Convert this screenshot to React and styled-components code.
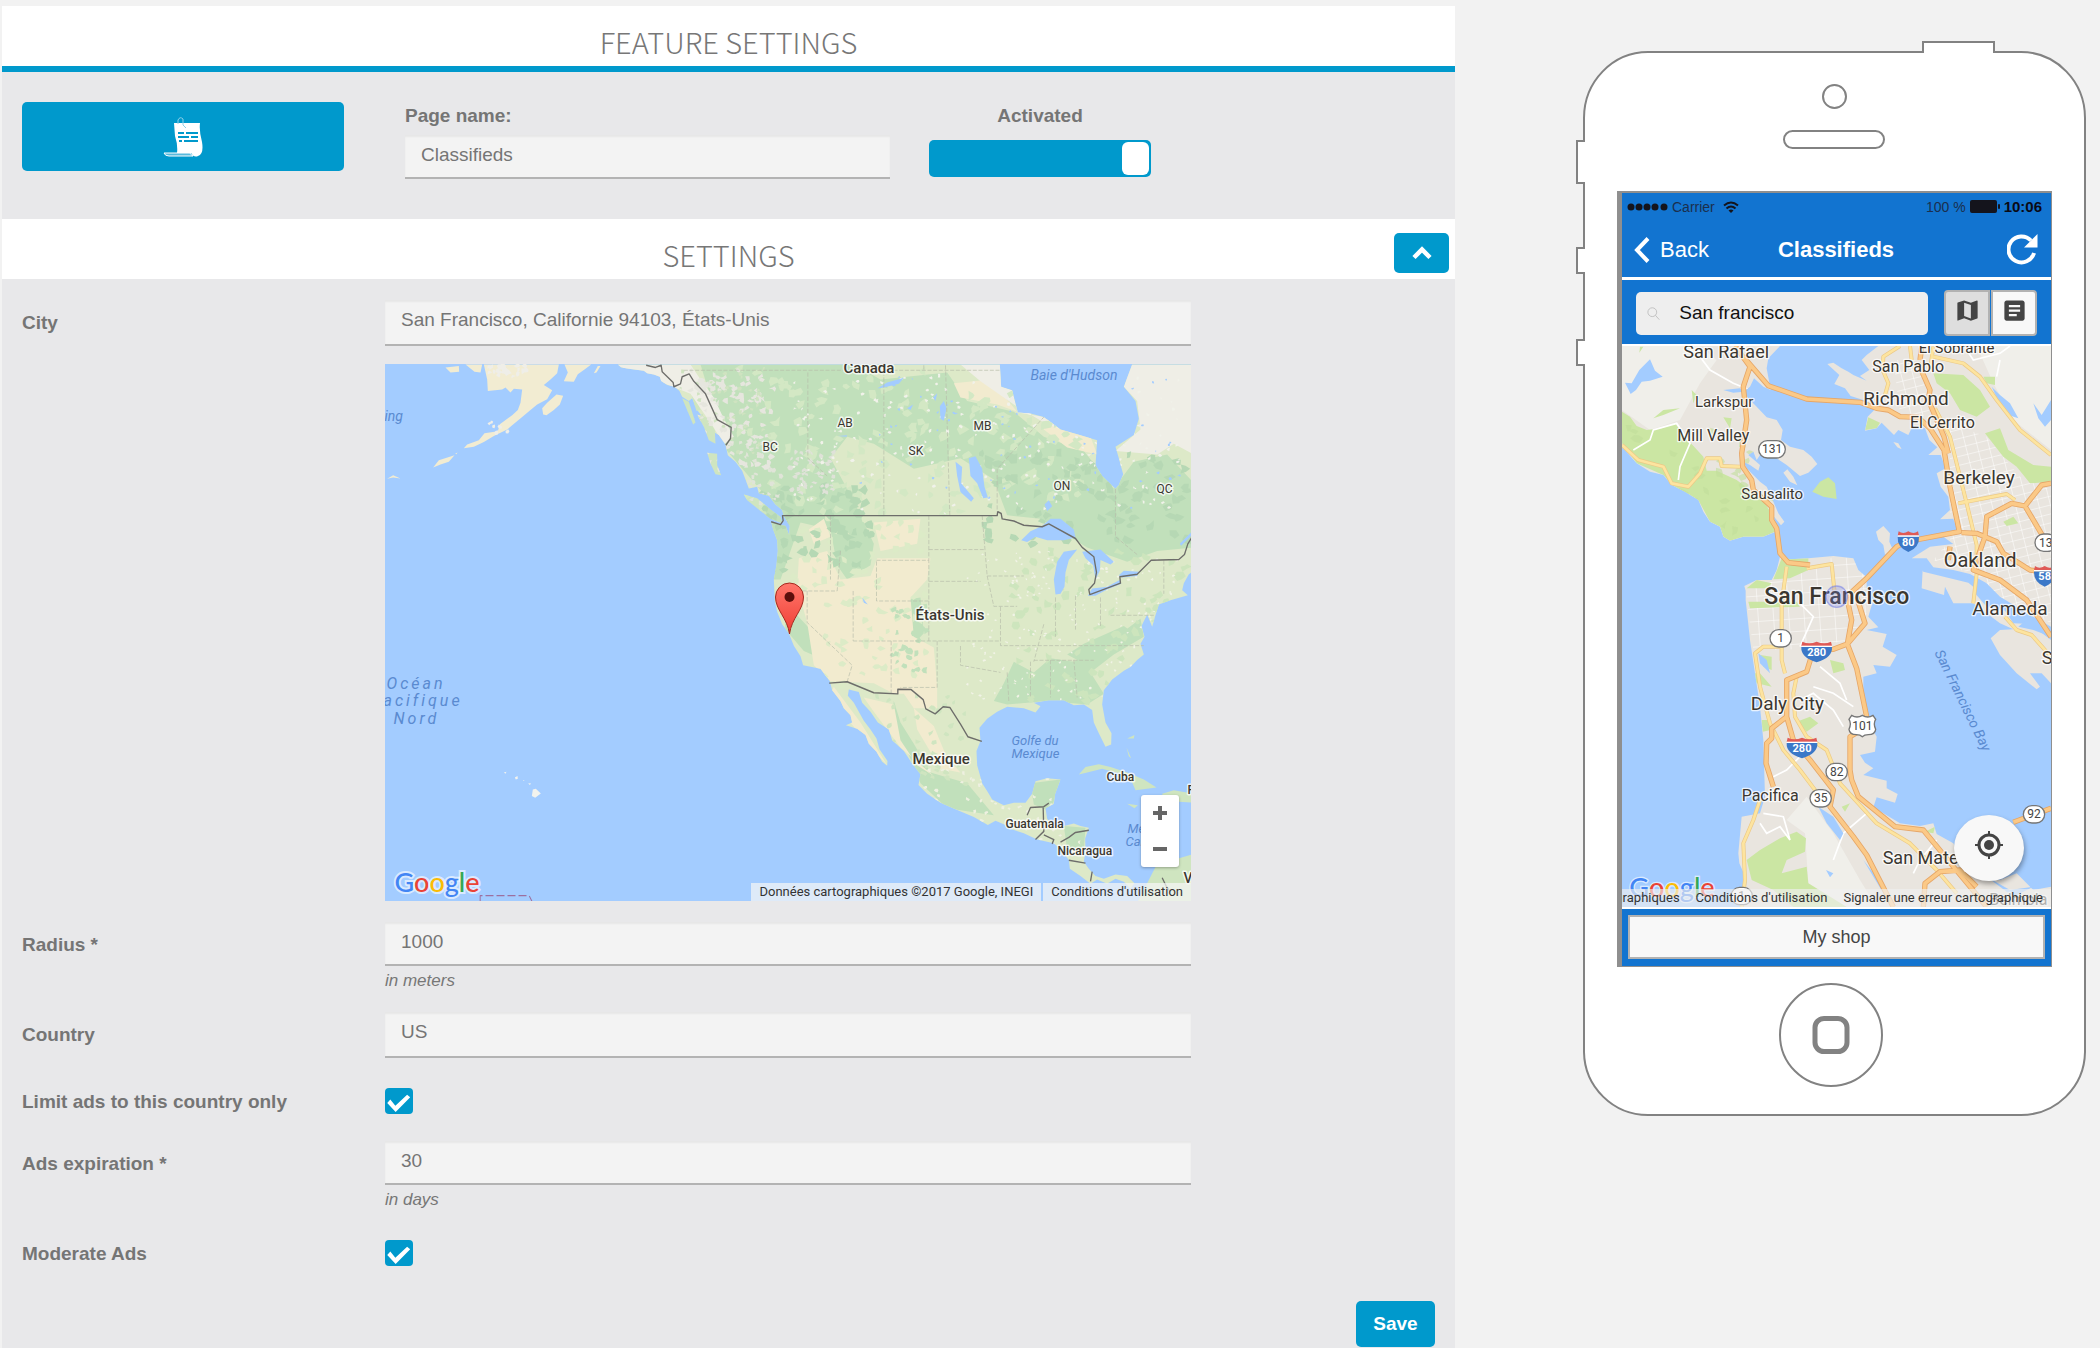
import React from "react";
import styled, { createGlobalStyle, css } from "styled-components";

const BLUE = "#0099cc";
const APP_BLUE = "#1274d0";
const WATER = "#a3ccff";
const SANS = '"Liberation Sans", Arial, sans-serif';
const MAPFONT = "Roboto, sans-serif";

const GlobalStyle = createGlobalStyle`
  *, *::before, *::after { box-sizing: border-box; }
  body { margin: 0; background: #f2f2f2; color: #757575; font-family: ${SANS}; font-size: 19px; line-height: 22px; }
  button, input { font-family: inherit; margin: 0; }
`;

const Page = styled.div`
  display: grid;
  grid-template-columns: minmax(0, 1fr) 645px;
  min-height: 100vh;
  padding: 6px 0 0 2px;
`;

const Panel = styled.main`
  background: #e8e8ea;
`;

const SectionHead = styled.header`
  display: grid;
  grid-template-columns: 1fr auto 1fr;
  height: ${(p) => (p.$accent ? 66 : 60)}px;
  background: #fff;
  border-bottom: ${(p) => (p.$accent ? `6px solid ${BLUE}` : "0")};
`;

const Title = styled.h2`
  grid-column: 2;
  margin: 0;
  padding-top: 12px;
  font: 300 29px/46px "Noto Sans CJK SC", "Open Sans", sans-serif;
  color: #777;
`;

const solid = css`
  border: 0;
  border-radius: 5px;
  background: ${BLUE};
  color: #fff;
  display: flex;
  align-items: center;
  justify-content: center;
  padding: 0;
`;

const CollapseButton = styled.button`
  ${solid}
  grid-column: 3;
  justify-self: end;
  align-self: end;
  width: 55px;
  height: 40px;
  margin: 0 6px 6px 0;
`;

const FeatureBar = styled.section`
  display: flex;
  height: 147px;
  padding: 30px 20px;
`;

const IconButton = styled.button`
  ${solid}
  width: 322px;
  height: 69px;
`;

const Field = styled.div`
  display: flex;
  flex-direction: column;
  align-items: ${(p) => (p.$center ? "center" : "stretch")};
  gap: ${(p) => (p.$center ? 13 : 8)}px;
  width: ${(p) => p.$width}px;
  margin-left: ${(p) => p.$gap}px;
  padding-top: 3px;
`;

const Label = styled.label`
  font-size: 19px;
  font-weight: 700;
`;

const TextInput = styled.input`
  display: block;
  width: 100%;
  height: ${(p) => (p.$tall ? 46 : 44)}px;
  padding: 0 16px ${(p) => (p.$tall ? 4 : 2)}px;
  border: 0;
  border-bottom: 2px solid #b3b3b3;
  border-radius: 0;
  background: #f3f3f3;
  box-shadow: inset 0 2px 2px rgba(0, 0, 0, 0.05);
  color: #757575;
  font-size: 19px;
  outline: 0;
`;

const Toggle = styled.input`
  appearance: none;
  width: 222px;
  height: 37px;
  display: flex;
  justify-content: flex-end;
  padding: 2px;
  border-radius: 5px;
  background: ${BLUE};
  &::before {
    content: "";
    width: 27px;
    height: 33px;
    border-radius: 6px;
    background: #fff;
  }
`;

const Form = styled.form`
  display: flex;
  flex-direction: column;
  gap: 21px;
  padding: 21px 20px 0;
`;

const Row = styled.div`
  display: grid;
  grid-template-columns: 363px minmax(0, 1fr) 244px;
  align-items: start;
  & > ${Label} { padding-top: 12px; }
`;

const CheckCell = styled.div`
  padding: 9px 0 6px;
  height: 41px;
`;

const Check = styled.input`
  appearance: none;
  display: block;
  width: 28px;
  height: 26px;
  margin: 0;
  border-radius: 4px;
  background: ${BLUE};
  &::before {
    content: "";
    display: block;
    width: 100%;
    height: 100%;
    background: #fff;
    clip-path: polygon(8% 58%, 19% 44%, 37% 68%, 79% 26%, 90% 36%, 38% 92%);
  }
`;

const Hint = styled.p`
  margin: 5px 0 0;
  font-size: 17px;
  line-height: 20px;
  font-style: italic;
  color: #777;
`;

const MapFrame = styled.div`
  position: relative;
  height: ${(p) => p.$h}px;
  margin-top: ${(p) => p.$top || 0}px;
  overflow: hidden;
  background: ${WATER};
  & > svg { display: block; width: 100%; height: 100%; }
`;

const ZoomControl = styled.div`
  position: absolute;
  right: 12px;
  bottom: 34px;
  width: 38px;
  border-radius: 3px;
  background: #fff;
  box-shadow: 0 1px 3px rgba(0, 0, 0, 0.3);
`;

const ZoomButton = styled.button`
  display: flex;
  align-items: center;
  justify-content: center;
  width: 38px;
  height: 36px;
  padding: 0;
  border: 0;
  background: none;
`;

const Credits = styled.div`
  position: absolute;
  right: 0;
  bottom: 0;
  display: flex;
  gap: ${(p) => (p.$phone ? 0 : 2)}px;
  font: 13px/18px ${MAPFONT};
  color: #333;
  white-space: nowrap;
  background: ${(p) => (p.$phone ? "rgba(240,240,240,.65)" : "none")};
  a, span {
    color: inherit;
    text-decoration: none;
    padding: 0 8px;
    background: ${(p) => (p.$phone ? "none" : "rgba(245,245,245,.72)")};
  }
`;

const SaveRow = styled.div`
  display: flex;
  justify-content: flex-end;
  padding-top: 8px;
`;

const SaveButton = styled.button`
  ${solid}
  width: 79px;
  height: 46px;
  font-size: 19px;
  font-weight: 700;
`;

/* ---------- phone ---------- */

const Preview = styled.aside`
  padding: 35px 0 0 121px;
`;

const Phone = styled.div`
  position: relative;
  width: 512px;
  height: 1077px;
  padding: 150px 36px 0 41px;
`;

const PhoneOutline = styled.svg`
  position: absolute;
  inset: 0;
`;

const Screen = styled.div`
  position: relative;
  height: 776px;
  border: solid #8f8f8f;
  border-width: 2px 1px 1px 5px;
  background: #fff;
`;

const StatusBar = styled.div`
  display: flex;
  align-items: center;
  height: 27px;
  padding: 0 9px 0 5px;
  background: ${APP_BLUE};
  color: #1b2f4d;
  font-size: 14px;
  line-height: 16px;
  gap: 4px;
`;

const Spacer = styled.span`
  flex: 1;
`;

const Clock = styled.strong`
  font-size: 15px;
  color: #0a0a14;
`;

const NavBar = styled.div`
  display: grid;
  grid-template-columns: 1fr auto 1fr;
  align-items: center;
  height: 57px;
  padding: 2px 13px 0 12px;
  background: ${APP_BLUE};
  color: #fff;
  font-size: 22px;
`;

const NavTitle = styled.strong`
  font-size: 22px;
  line-height: 26px;
`;

const NavButton = styled.button`
  display: flex;
  align-items: center;
  gap: 10px;
  justify-self: ${(p) => (p.$end ? "end" : "start")};
  padding: 0;
  border: 0;
  background: none;
  color: #fff;
  font-size: 22px;
  line-height: 26px;
`;

const SearchBar = styled.div`
  display: flex;
  align-items: center;
  height: 64px;
  margin: 3px 0 2px;
  padding: 2px 14px 0;
  background: ${APP_BLUE};
`;

const SearchBox = styled.label`
  display: flex;
  align-items: center;
  gap: 19px;
  width: 292px;
  height: 43px;
  padding: 0 11px;
  border-radius: 5px;
  background: #eee;
`;

const SearchInput = styled.input`
  width: 100%;
  padding: 0;
  border: 0;
  background: none;
  color: #111;
  font-size: 19px;
  outline: 0;
`;

const Segments = styled.div`
  display: flex;
  gap: 1px;
  margin-left: 16px;
`;

const Segment = styled.button`
  display: flex;
  align-items: center;
  justify-content: center;
  width: 46px;
  height: 46px;
  padding: 0 0 6px;
  border: 2px solid #b2b2b2;
  border-radius: ${(p) => (p.$on ? "4px 0 0 4px" : "0 4px 4px 0")};
  background: ${(p) => (p.$on ? "#dedede" : "#f8f8f8")};
`;

const LocateButton = styled.button`
  position: absolute;
  right: 27px;
  bottom: 26px;
  display: flex;
  align-items: center;
  justify-content: center;
  width: 70px;
  height: 66px;
  padding: 0 0 6px;
  border: 0;
  border-radius: 50%;
  background: #f8f8f8;
  box-shadow: 1px 3px 5px rgba(0, 0, 0, 0.35);
`;

const ShopBar = styled.div`
  height: 57px;
  margin-top: 2px;
  padding: 6px;
  background: ${APP_BLUE};
`;

const ShopButton = styled.button`
  width: 100%;
  height: 44px;
  border: 2px solid #b2b2b2;
  background: #f8f8f8;
  color: #444;
  font-size: 18px;
`;

const PlaceText = styled.text`
  font-family: ${MAPFONT};
  font-size: ${(p) => p.$size}px;
  font-weight: ${(p) => p.$weight || 400};
  font-style: ${(p) => (p.$sea ? "italic" : "normal")};
  letter-spacing: ${(p) => p.$track || 0}px;
  fill: ${(p) => (p.$sea ? "#5a8ad0" : "#3b3730")};
  stroke: ${(p) => (p.$sea ? "none" : "rgba(255,255,255,.75)")};
  stroke-width: ${(p) => p.$halo || 3}px;
  stroke-linejoin: round;
  paint-order: stroke;
`;

const LogoText = styled.text`
  font-family: Lato, sans-serif;
  font-size: ${(p) => p.$size}px;
  font-weight: 500;
  stroke: rgba(255, 255, 255, 0.6);
  stroke-width: ${(p) => p.$halo}px;
  paint-order: stroke;
`;

function GoogleLogo({ x, y, size, halo }) {
  return (
    <LogoText x={x} y={y} $size={size} $halo={halo}>
      <tspan fill="#4285f4">G</tspan>
      <tspan fill="#ea4335">o</tspan>
      <tspan fill="#fbbc05">o</tspan>
      <tspan fill="#4285f4">g</tspan>
      <tspan fill="#34a853">l</tspan>
      <tspan fill="#ea4335">e</tspan>
    </LogoText>
  );
}

/* Repeatable scatter of small terrain patches */
function scatter(seed, count, [x0, y0, x1, y1], size) {
  let s = seed;
  const rnd = () => {
    s = (s * 16807) % 2147483647;
    return s / 2147483647;
  };
  let d = "";
  for (let i = 0; i < count; i++) {
    const cx = x0 + rnd() * (x1 - x0);
    const cy = y0 + rnd() * (y1 - y0);
    const n = 6;
    for (let k = 0; k < n; k++) {
      const a = (k / n) * Math.PI * 2;
      const r = size * (0.25 + rnd());
      d += `${k ? "L" : "M"}${Math.round(cx + Math.cos(a) * r * 1.2)} ${Math.round(cy + Math.sin(a) * r)}`;
    }
    d += "Z";
  }
  return d;
}

const MAINLAND =
  "M712 38L722 46 745 50 790 55 800 62 820 66 838 72 842 84 860 95 882 100 897 112 905 128 925 140 935 132 950 165 975 195 995 225 1015 235 1035 262 1042 292 1065 310 1085 335 1095 360 1105 385 1130 380 1135 398 1165 405 1185 430 1205 445 1210 462 1228 490 1226 516 1215 490 1200 487 1172 478 1178 500 1190 530 1192 560 1188 600 1180 640 1183 700 1190 730 1205 765 1225 790 1240 825 1260 855 1268 880 1320 890 1348 925 1355 950 1380 980 1390 1000 1410 1020 1415 1040 1396 1048 1430 1058 1455 1075 1465 1100 1488 1122 1505 1150 1520 1161 1521 1148 1497 1115 1488 1085 1470 1060 1450 1035 1435 1010 1420 985 1402 965 1405 948 1435 955 1445 985 1470 1010 1492 1040 1525 1060 1535 1090 1570 1120 1595 1155 1620 1185 1614 1215 1640 1240 1680 1265 1730 1285 1780 1305 1822 1327 1845 1315 1870 1325 1895 1340 1930 1350 1970 1368 2020 1378 2040 1395 2065 1425 2068 1450 2100 1470 2130 1492 2150 1480 2180 1492 2205 1478 2230 1486 2250 1505 2262 1490 2240 1470 2205 1466 2170 1478 2145 1470 2125 1450 2110 1430 2115 1400 2114 1365 2125 1335 2100 1330 2080 1323 2050 1330 2020 1330 2000 1310 1995 1280 2020 1268 2024 1240 2040 1200 2000 1196 1965 1205 1955 1240 1935 1265 1900 1265 1870 1272 1835 1256 1825 1240 1805 1210 1790 1160 1788 1120 1800 1092 1797 1055 1820 1030 1850 1010 1880 996 1930 1000 1965 1012 1980 995 1960 985 2005 978 2050 978 2080 992 2110 990 2135 1005 2140 1040 2155 1070 2175 1108 2192 1102 2193 1070 2175 1040 2165 990 2170 950 2195 920 2230 895 2250 885 2270 865 2290 850 2280 820 2292 800 2283 770 2300 738 2315 772 2325 740 2335 710 2370 698 2422 684 2405 670 2410 650 2425 625 2440 615 2440 38 2255 38 2230 100 2265 140 2275 190 2260 235 2205 268 2215 300 2228 345 2215 375 2205 386 2165 350 2145 320 2150 250 2100 236 2040 220 1990 185 1950 175 1912 172 1895 110 1862 100 1858 38Z";

const ALASKA =
  "M310 38L320 80 322 112 365 108 375 102 390 116 400 106 425 108 420 145 412 165 395 180 358 205 352 225 312 230 295 250 260 262 250 272 280 268 310 255 340 238 380 220 405 200 425 185 450 165 470 150 500 135 515 110 490 95 510 80 530 62 535 38ZM485 160L500 145 528 122 548 125 538 150 520 165 498 180 488 178ZM195 46L235 42 236 58 210 60ZM255 38L305 38 300 60 282 58ZM550 85L562 60 552 38 632 38 612 52 592 65 580 86ZM640 62L652 42 660 42 648 60ZM158 326L175 306 222 292 205 310 180 318ZM20 358L38 348 60 357 38 354ZM224 288L231 284 228 289Z";

const ISLANDS =
  "M1090 402L1130 412 1165 440 1200 465 1205 482 1170 470 1130 440 1100 418ZM980 285L1010 288 1010 320 1022 348 1005 345 990 315ZM950 178L985 188 1003 222 1005 260 985 250 970 212ZM905 132L925 142 945 200 938 206 922 170ZM935 95L945 130 960 165 948 168 935 130ZM2095 1186L2115 1165 2155 1157 2190 1165 2240 1180 2290 1200 2328 1222 2265 1230 2255 1208 2215 1182 2165 1170 2120 1180ZM2345 1240L2380 1230 2440 1240 2440 1265 2395 1262 2350 1258ZM2240 1268L2272 1272 2262 1280ZM2300 1490L2325 1445 2360 1430 2440 1408 2440 1545 2270 1545ZM2238 1110L2252 1140 2245 1135ZM2240 1085L2262 1075 2260 1085Z";

const LAKES =
  "M1922 530L1950 505 1985 490 2010 470 2040 470 2080 500 2085 522 2050 530 2000 530 1965 520 1940 535ZM2025 682L2020 640 2030 590 2050 562 2090 556 2065 585 2055 620 2052 660 2040 680ZM2105 562L2160 556 2200 590 2190 598 2160 585 2158 615 2145 640 2138 600 2115 580ZM2122 685L2135 665 2180 660 2220 640 2222 652 2180 668 2145 685ZM2215 628L2230 615 2275 618 2270 630 2225 634ZM1765 300L1785 295 1805 330 1812 380 1822 410 1808 412 1790 370 1770 350ZM1725 310L1745 325 1742 370 1780 412 1772 422 1740 395 1730 350ZM1678 155L1690 140 1698 160 1690 195 1680 190ZM1490 105L1520 88 1570 75 1555 92 1510 102ZM1992 430L2005 418 2015 435 2000 448ZM1658 130L1670 118 1665 140ZM1580 160L1598 150 1590 165ZM2398 540L2440 500 2440 510 2402 545ZM1445 690L1462 710 1450 705ZM1372 238L1400 236 1398 240Z";

const LAND_PATCH = {
  forest:
    "M960 38L1420 38 1500 80 1700 60 1760 140 1900 170 1990 240 2110 280 2200 385 2260 310 2360 290 2440 370 2440 550 2330 560 2240 590 2120 550 1980 470 1880 460 1840 360 1740 300 1600 330 1480 260 1400 240 1350 300 1420 420 1480 540 1470 600 1400 640 1370 600 1350 500 1260 480 1200 640 1180 640 1150 400 1040 280Z",
  forest2:
    "M1900 870L1960 900 2010 860 2080 870 2180 820 2280 750 2290 800 2200 850 2130 900 2170 960 2120 990 2000 980 1880 990 1840 980 1870 930ZM2060 850L2110 820 2230 770 2260 790 2160 840 2100 870ZM1540 980L1560 1040 1600 1100 1650 1180 1760 1210 1840 1300 1700 1280 1620 1210 1580 1120 1530 1060ZM1500 580L1600 590 1560 640 1510 680ZM1550 700L1620 690 1630 790 1590 830 1540 800ZM1210 700L1290 780 1320 860 1270 840 1215 780ZM1950 1210L2040 1200 2010 1290 1960 1270ZM2050 1330L2115 1335 2110 1400 2060 1395ZM1470 870L1540 900 1530 920 1480 890Z",
  desert:
    "M1255 580L1340 560 1380 640 1470 630 1490 580 1650 580 1640 640 1590 690 1600 800 1660 830 1670 940 1670 1000 1600 1000 1570 960 1540 960 1480 930 1350 925 1300 880 1280 760 1250 660ZM1285 500L1330 470 1350 520 1300 540ZM1480 480L1620 470 1610 540 1500 560ZM1360 940L1440 1040 1500 1130 1520 1160 1480 1120 1400 1030 1350 960ZM1450 970L1540 990 1560 1090 1610 1160 1660 1190 1560 1110 1480 1010ZM1600 1000L1660 1050 1700 1140 1740 1180 1680 1170 1610 1060ZM2000 190L2130 240 2150 290 2060 270 1990 220ZM1720 90L1830 80 1910 170 1850 150 1740 130Z",
  tundra:
    "M1740 38L1860 38 1865 100 1895 110 1912 172 1990 185 2040 220 1990 200 1900 150 1800 85ZM2250 38L2440 38 2440 290 2380 260 2330 290 2205 280 2280 220 2270 140 2230 100ZM700 38L930 38 960 80 1000 130 1030 190 1060 240 1030 262 1000 215 930 120 850 90Z",
};

const BORDERS =
  "M797 40L825 46 842 40 845 58 878 88 880 100 900 92 905 72 926 64 940 85 975 120 1010 192 1052 214 1050 245 1036 264M1172 478L1200 486 1208 475 1206 461 1850 461 1852 450 1862 455 1865 470 1900 476 1930 488 1985 492 2005 484 2085 525 2105 550 2140 576 2148 620 2142 650 2125 668 2128 682 2220 650 2218 632 2270 625 2312 586 2395 584 2412 570 2422 540 2434 522M1346 930L1400 926 1480 957 1552 960 1552 947 1592 948 1628 976 1636 1002 1664 1016 1688 996 1708 998 1740 1045 1762 1080 1804 1093M1940 1300L1950 1278 1990 1276 2005 1266M1988 1278L1990 1345 1965 1368M1990 1355L2020 1368 2015 1380M2040 1375L2065 1362 2085 1348 2125 1342M2065 1426L2115 1434M2135 1458L2130 1485M2345 1475L2358 1500 2370 1515";

const STATE_LINES =
  "M1282 60V300L1340 350M1510 40V461M1695 40L1708 461M1850 461V330L1990 185M1350 461V640M1380 560L1370 672H1260M1418 672V812M1488 586H1645V700H1488V586M1645 461V586M1645 556H1815M1645 645H1800M1418 812H1860M1532 812V960M1670 812V942H1560M1280 672V760L1415 880 1400 926M1645 700V812M1740 826V880L1860 900M1805 461L1820 630H1930M1820 630L1840 715H1910M1860 716V825H2060M1880 900L1885 980M1950 870V970M2010 865V970M2080 865L2090 970M1960 866H2140M2060 825H2290M2025 690V800M2085 685V780M2160 690V770M2190 740H2320M1990 765L1960 870M2205 386V520L2270 570M2350 586V680M910 54H1860M1630 40V54";

function NorthAmericaMap() {
  return (
    <svg viewBox="0 0 807 537" preserveAspectRatio="xMidYMid slice" role="img" aria-label="Amérique du Nord">
      <defs>
        <clipPath id="na-land">
          <path d={MAINLAND} />
          <path d={ISLANDS} />
        </clipPath>
        <linearGradient id="pin" x1="0" y1="0" x2="0" y2="1">
          <stop offset="0" stopColor="#ff776b" />
          <stop offset="1" stopColor="#ef3d34" />
        </linearGradient>
      </defs>
      <rect width="807" height="538" fill={WATER} />
      <g transform="translate(-4 -13) scale(.33333 .35714)">
        <path d={MAINLAND} fill="#dde9c8" />
        <path d={ALASKA} fill="#f2ecd2" />
        <path d={scatter(5, 26, [325, 40, 440, 70], 8)} fill="#efeee8" />
        <path d={scatter(9, 6, [330, 195, 410, 235], 6)} fill="#efeee8" />
        <path d={ISLANDS} fill="#cfe5c0" />
        <g clipPath="url(#na-land)">
          <path d={LAND_PATCH.forest} fill="#c1e0bb" />
          <path d={LAND_PATCH.forest2} fill="#c1e0bb" />
          <path d={LAND_PATCH.desert} fill="#f2ebcf" />
          <path d={LAND_PATCH.tundra} fill="#efeee6" />
          <path d={scatter(11, 150, [1080, 40, 2100, 460], 15)} fill="#d3e8c4" />
          <path d={scatter(71, 80, [1240, 470, 1640, 940], 12)} fill="#dcebc7" />
          <path d={scatter(17, 90, [1900, 560, 2420, 980], 13)} fill="#cde5bd" />
          <path d={scatter(23, 90, [1800, 280, 2430, 540], 14)} fill="#b6d8b4" />
          <path d={scatter(31, 70, [1150, 380, 1480, 620], 14)} fill="#b5d8b4" />
          <path d={scatter(37, 130, [930, 50, 1180, 330], 9)} fill="#e6e6de" />
          <path d={scatter(73, 60, [1050, 250, 1200, 430], 7)} fill="#e0e4d8" />
          <path d={scatter(83, 70, [900, 50, 1180, 300], 6)} fill="#cfe3c0" />
          <path d={scatter(41, 50, [1230, 280, 1360, 400], 7)} fill="#dfe2d8" />
          <path d={scatter(43, 230, [1240, 60, 2400, 460], 5)} fill="#f1f2ea" />
          <path d={scatter(47, 200, [1760, 560, 2400, 980], 4)} fill="#f1f3e6" />
          <path d={scatter(53, 80, [1600, 1150, 2100, 1470], 6)} fill="#eef0e0" />
          <path d={scatter(59, 30, [1540, 700, 1640, 900], 9)} fill="#c1e0bb" />
          <path d={scatter(61, 40, [1490, 960, 1760, 1230], 9)} fill="#cfe5c0" />
          <path d={scatter(67, 70, [1440, 60, 2400, 440], 4)} fill={WATER} />
        </g>
        <path d={LAKES} fill={WATER} />
        <path d="M370 1180L378 1178 375 1184ZM403 1194L411 1190 412 1198 406 1200ZM427 1201L432 1202 430 1204ZM443 1210L452 1211 448 1215ZM457 1228L466 1226 481 1239 464 1251 454 1246Z" fill="#f3f3ee" />
        <g fill="none" strokeLinejoin="round">
          <path d={STATE_LINES} stroke="#b7bdab" strokeWidth="2" strokeDasharray="12 5" />
          <path d={BORDERS} stroke="#6d6d6a" strokeWidth="4" />
          <path d="M299 1542V1525H446L455 1542" stroke="#9c6f9f" strokeWidth="3" strokeDasharray="24 9" />
        </g>
      </g>
      <PlaceText x="459" y="9" $size={15} $weight={500}>Canada</PlaceText>
      <PlaceText x="646" y="16" $size={14} $sea>Baie d'Hudson</PlaceText>
      <PlaceText x="0" y="57" $size={14} $sea>ing</PlaceText>
      <PlaceText x="2" y="325" $size={16} $sea $track={3}>Océan</PlaceText>
      <PlaceText x="-1" y="342" $size={16} $sea $track={3}>acifique</PlaceText>
      <PlaceText x="9" y="360" $size={16} $sea $track={3}>Nord</PlaceText>
      <PlaceText x="378" y="87" $size={12}>BC</PlaceText>
      <PlaceText x="453" y="63" $size={12}>AB</PlaceText>
      <PlaceText x="524" y="91" $size={12}>SK</PlaceText>
      <PlaceText x="589" y="66" $size={12}>MB</PlaceText>
      <PlaceText x="669" y="126" $size={12}>ON</PlaceText>
      <PlaceText x="772" y="129" $size={12}>QC</PlaceText>
      <PlaceText x="531" y="256" $size={15} $weight={500}>États-Unis</PlaceText>
      <PlaceText x="528" y="400" $size={15} $weight={500}>Mexique</PlaceText>
      <PlaceText x="627" y="381" $size={13} $sea>Golfe du</PlaceText>
      <PlaceText x="627" y="394" $size={13} $sea>Mexique</PlaceText>
      <PlaceText x="722" y="417" $size={12} $weight={500}>Cuba</PlaceText>
      <PlaceText x="621" y="464" $size={12} $weight={500}>Guatemala</PlaceText>
      <PlaceText x="673" y="491" $size={12} $weight={500}>Nicaragua</PlaceText>
      <PlaceText x="743" y="469" $size={13} $sea>Mer</PlaceText>
      <PlaceText x="741" y="482" $size={13} $sea>Caraï</PlaceText>
      <PlaceText x="803" y="430" $size={12} $weight={500}>P</PlaceText>
      <PlaceText x="799" y="519" $size={14} $weight={500}>V</PlaceText>
      <path d="M405 270C403 254 391 246 391 233A14 14 0 0 1 419 233C419 246 407 254 405 270Z" fill="url(#pin)" stroke="#a5281f" />
      <circle cx="405" cy="233" r="5" fill="#5b0f0c" />
      <GoogleLogo x={10} y={528} size={27} halo={4} />
    </svg>
  );
}

/* ---------- bay area ---------- */

const MARIN =
  "M66 18L540 18 505 55 500 85 512 150 490 140 462 115 450 140 430 155 445 175 470 200 500 232 530 240 548 270 543 300 570 320 610 330 635 350 652 372 625 398 600 408 560 375 530 355 500 345 480 345 470 360 460 335 445 345 480 375 475 392 450 375 430 365 440 385 480 425 500 440 518 480 535 520 553 545 543 556 522 530 527 575 490 590 430 590 390 602 370 590 360 560 330 545 310 515 295 480 255 455 215 435 190 405 150 395 110 370 66 320ZM550 398L562 388 580 410 592 436 570 425Z";
const EASTBAY =
  "M835 18L800 45 785 60 808 90 780 108 800 122 760 105 745 95 725 85 700 68 682 72 718 105 703 132 735 145 752 168 790 180 832 200 803 230 795 272 830 265 845 248 882 285 895 270 925 285 938 258 975 265 988 300 1012 322 985 345 1022 345 1037 385 1010 400 1022 440 1045 470 1050 510 1020 538 1060 536 1075 578 1030 590 1060 612 990 620 935 655 980 655 1000 682 1060 690 1110 702 1160 730 1200 770 1250 800 1300 830 1353 860 1353 18ZM968 690L1035 708 1120 725 1125 760 1160 800 1215 812 1240 850 1290 852 1353 900 1353 1030 1325 1000 1290 1000 1320 1040 1310 1048 1250 1000 1200 945 1172 895 1200 870 1240 868 1200 850 1120 790 1060 790 1035 740 1032 765 965 745Z";
const PENINSULA =
  "M437 752L433 738 470 720 515 720 530 690 540 650 570 658 625 655 700 648 760 655 775 690 800 712 800 745 818 785 805 830 835 862 800 870 860 882 848 920 890 945 870 980 820 975 830 1000 790 1010 790 1060 802 1140 830 1190 825 1235 780 1245 795 1268 820 1285 790 1305 860 1322 860 1345 893 1362 885 1388 830 1372 820 1402 870 1432 900 1450 960 1458 1000 1450 1010 1482 1060 1510 1090 1560 1130 1600 1200 1620 1250 1600 1300 1650 1353 1640 1353 1701 430 1701 440 1620 418 1570 415 1540 425 1430 480 1420 495 1370 490 1200 480 1100 465 1000 450 900 437 780Z";

const PARKS =
  "M66 215L90 230 110 258 140 270 185 265 225 250 250 285 310 350 320 392 350 392 410 420 490 480 522 535 525 575 490 590 430 590 390 602 370 590 360 560 330 545 295 480 215 435 190 405 110 370 66 310ZM637 455L660 425 685 412 705 430 710 477 670 470ZM1000 100L1090 105 1140 150 1170 200 1130 230 1080 210 1050 160 1010 130ZM1155 280L1200 265 1225 330 1300 375 1353 380 1353 425 1290 430 1250 380 1210 350ZM520 718L545 655 625 655 625 690 570 715ZM440 745L470 720 515 730 500 745ZM445 785L590 785 600 800 450 805ZM795 270L805 232 840 248 830 265ZM1150 110L1185 110 1185 135 1160 130ZM985 402L1010 400 1015 430ZM690 960L730 970 735 990 700 1000ZM480 945L515 950 515 990 490 980ZM455 1000L480 1000 515 1040 470 1030ZM590 1145L630 1130 655 1150 620 1175ZM485 1140L505 1140 512 1170 488 1175ZM480 1530L540 1495 590 1475 618 1495 615 1535 560 1560 545 1600 620 1580 625 1630 740 1701 580 1701 520 1650 455 1620 440 1560ZM160 235L190 210 240 205 190 225ZM275 150L290 165 280 190ZM370 232L395 235 390 265ZM1210 545L1240 530 1255 550 1220 558ZM725 1400L750 1390 735 1415ZM975 1475L1005 1460 1000 1480ZM120 20L130 20 118 38Z";

const ORANGE =
  "M405 18L450 80 430 140 440 240 425 340 428 380 455 420 460 450 515 500 515 540 530 565 540 640 565 668 630 675M430 50L505 137 620 177 780 187 830 205 865 210 900 230 955 232 990 265 1032 330 1050 440 1078 575 920 605 890 620 800 715 740 770 755 840 742 912 770 985 800 1130 800 1160 750 1190 750 1290 755 1320 775 1370 885 1460 970 1470 1060 1580 1110 1640 1160 1701M955 70L990 150 985 180 1000 215 1032 290 1045 340M770 770L795 850 742 912 700 928 640 930 620 995 560 1020 560 1130 515 1165 515 1195 500 1210 498 1270 520 1340M560 1130L580 1200 630 1260 700 1350 690 1400 760 1490 800 1545 880 1701M1085 578L1130 580 1190 605 1210 640 1290 690 1353 700M1353 430L1325 435 1275 498 1235 490 1160 530 1155 590 1120 690 1200 720 1280 780 1353 890M1275 498L1353 630M1240 1447L1353 1405M970 1701L975 1630 1020 1595 1080 1590 1130 1640M1050 620L1045 660M965 20L960 60";
const YELLOW =
  "M66 315L115 360 190 380 215 430 265 440 300 400 320 355 360 355 365 378 420 380M900 18L850 50 848 90 865 130 855 165M930 18L935 60M1000 50L1090 70 1140 110 1190 180 1260 270 1353 345M1005 205L1050 290 1100 490 1130 615 1130 700 1120 790M1075 490L1220 462 1245 480M620 685L695 672 705 770M560 680L545 790 545 960 555 1000M545 920L490 920 465 940 480 1040 510 1150 550 1230 600 1290 660 1370M590 1010L580 1060 585 1130 620 1190 680 1230 720 1330 830 1450 930 1510 1010 1590 1070 1660M480 1380L460 1440 430 1510 435 1620 425 1701M1215 830L1250 870 1295 885 1353 950M1000 20L990 90";
const STREETS =
  "M300 50L330 90 400 130 450 150M100 330L150 300 160 270 230 250 270 310 240 380 235 420M480 1450L500 1480 540 1460 570 1500 550 1430 490 1420M520 1310L560 1290 600 1250M640 1040L700 1060 760 1100M660 980L720 1030 740 1080M600 1080L640 1060 700 1110 730 1160M940 1600L960 1560 1010 1500M1100 30L1120 60 1200 40 1230 18M1200 60L1190 110M700 1560L730 1480 800 1420M600 920L640 830 600 790";

function Interstate({ x, y, label }) {
  const w = label.length > 2 ? 46 : 32;
  return (
    <g transform={`translate(${x} ${y})`}>
      <path d={`M${-w} -12Q${-w - 2} 20 0 34Q${w + 2} 20 ${w} -12Z`} fill="#3b78c8" />
      <path d={`M${-w + 3} -28Q${-w / 2} -18 0 -28Q${w / 2} -18 ${w - 3} -28L${w} -15H${-w}Z`} fill="#df5a56" />
      <path d={`M${-w} -14H${w}`} stroke="#fff" strokeWidth="4" />
      <text y="15" textAnchor="middle" fontFamily="Roboto" fontWeight="700" fontSize="33" fill="#fff">
        {label}
      </text>
    </g>
  );
}

function RouteBadge({ x, y, label, us }) {
  const w = label.length > 2 ? 40 : 32;
  return (
    <g transform={`translate(${x} ${y})`}>
      {us ? (
        <path d="M-32 -32Q-16 -22 0 -32Q16 -22 32 -32L40 -20Q32 -8 40 10Q38 26 18 26Q6 26 0 32Q-6 26 -18 26Q-38 26 -40 10Q-32 -8 -40 -20Z" fill="#fff" stroke="#767676" strokeWidth="4" />
      ) : (
        <rect x={-w} y="-26" width={w * 2} height="52" rx="26" fill="#fff" stroke="#767676" strokeWidth="4" />
      )}
      <text y="12" textAnchor="middle" fontFamily="Roboto" fontSize="36" fill="#444">
        {label}
      </text>
    </g>
  );
}

function BayAreaMap() {
  return (
    <svg viewBox="66 18 1287 1683" preserveAspectRatio="xMidYMid slice" role="img" aria-label="San Francisco">
      <defs>
        <pattern id="grid-east" width="34" height="26" patternUnits="userSpaceOnUse" patternTransform="rotate(-14)">
          <path d="M0 0H34M0 0V26" stroke="#fff" strokeWidth="3" fill="none" />
        </pattern>
        <pattern id="grid-sf" width="46" height="38" patternUnits="userSpaceOnUse" patternTransform="rotate(-4)">
          <path d="M0 0H46M0 0V38" stroke="#fff" strokeWidth="3" fill="none" />
        </pattern>
        <clipPath id="bay-land">
          <path d={MARIN} />
          <path d={EASTBAY} />
          <path d={PENINSULA} />
        </clipPath>
      </defs>
      <rect x="66" y="18" width="1287" height="1683" fill={WATER} />
      <g fill="#e9e5df">
        <path d={MARIN} />
        <path d={EASTBAY} />
        <path d={PENINSULA} />
        <path d="M828 575L850 558 870 580 868 605 878 628 855 644 850 615 835 600ZM880 306L895 310 905 328 892 322Z" />
      </g>
      <g clipPath="url(#bay-land)">
        <path d="M66 18H300L350 60 300 130 240 240 150 270 66 210ZM1130 18H1353V330L1240 240 1180 130ZM620 1370L700 1480 780 1620 830 1701H740L625 1630 615 1480 560 1440Z" fill="#f0efea" />
        <path d="M1050 250L1160 290 1210 350 1260 410 1353 450V850L1200 770 1110 700 1000 660 1050 600ZM880 60L960 60 990 230 900 220Z" fill="url(#grid-east)" />
        <path d="M437 750L630 690 700 650 760 655 800 712 815 790 760 900 560 930 460 930Z" fill="url(#grid-sf)" />
        <path d={PARKS} fill="#cbe6a3" />
        <path d={scatter(3, 40, [80, 260, 520, 590], 14)} fill="#c2de9b" opacity=".6" />
        <path d={STREETS} fill="none" stroke="#fff" strokeWidth="5" />
      </g>
      <path d="M637 455L660 425 685 412 705 430 710 477 670 470Z" fill="#cbe6a3" />
      <path
        d="M75 128L95 130 118 90 150 58 165 92 188 110 150 122 125 125 108 150 92 162ZM1175 140L1200 165 1230 190 1255 235 1225 225 1200 195ZM1300 190L1325 225 1353 180V240L1335 260 1315 235ZM935 660L1000 690 1120 712 1170 760 1150 765 1105 728 970 695ZM1255 860L1290 830 1320 850 1353 870V890L1300 870ZM655 1400L700 1430 730 1480 720 1500 680 1450ZM678 1590L700 1600 690 1612ZM790 1560L860 1650 880 1701 850 1660ZM1160 1610L1230 1650 1300 1640 1240 1670ZM370 150L420 145 430 155 400 158ZM475 940L500 960 510 1000 480 970Z"
        fill={WATER}
      />
      <g fill="none" strokeLinejoin="round">
        <path d={YELLOW} stroke="#ecc986" strokeWidth="12" />
        <path d={YELLOW} stroke="#fde49f" strokeWidth="8" />
        <path d={ORANGE} stroke="#e6a667" strokeWidth="16" />
        <path d={ORANGE} stroke="#fbc987" strokeWidth="11" />
      </g>
      <Interstate x={925} y={602} label="80" />
      <Interstate x={1334} y={706} label="58" />
      <Interstate x={650} y={933} label="280" />
      <Interstate x={606} y={1221} label="280" />
      <RouteBadge x={516} y={328} label="131" />
      <RouteBadge x={1337} y={608} label="13" />
      <RouteBadge x={542} y={895} label="1" />
      <RouteBadge x={787} y={1158} label="101" us />
      <RouteBadge x={710} y={1296} label="82" />
      <RouteBadge x={662} y={1375} label="35" />
      <RouteBadge x={1302} y={1423} label="92" />
      <RouteBadge x={425} y={1668} label="1" />
      <PlaceText x="250" y="53" $size={54} $halo={8}>San Rafael</PlaceText>
      <PlaceText x="956" y="38" $size={45} $halo={8}>El Sobrante</PlaceText>
      <PlaceText x="817" y="95" $size={48} $halo={8}>San Pablo</PlaceText>
      <PlaceText x="790" y="195" $size={57} $halo={8}>Richmond</PlaceText>
      <PlaceText x="285" y="200" $size={45} $halo={8}>Larkspur</PlaceText>
      <PlaceText x="930" y="265" $size={48} $halo={8}>El Cerrito</PlaceText>
      <PlaceText x="232" y="303" $size={48} $halo={8}>Mill Valley</PlaceText>
      <PlaceText x="1030" y="431" $size={57} $halo={8}>Berkeley</PlaceText>
      <PlaceText x="424" y="476" $size={45} $halo={8}>Sausalito</PlaceText>
      <PlaceText x="1031" y="681" $size={60} $halo={8}>Oakland</PlaceText>
      <PlaceText x="493" y="793" $size={69} $weight={500} $halo={8}>San Francisco</PlaceText>
      <PlaceText x="1117" y="824" $size={57} $halo={8}>Alameda</PlaceText>
      <PlaceText x="1325" y="973" $size={54} $halo={8}>San</PlaceText>
      <PlaceText x="452" y="1111" $size={57} $halo={8}>Daly City</PlaceText>
      <PlaceText x="425" y="1384" $size={48} $halo={8}>Pacifica</PlaceText>
      <PlaceText x="848" y="1573" $size={54} $halo={8}>San Mateo</PlaceText>
      <PlaceText x="1168" y="1695" $size={48} $halo={8}>Belmola</PlaceText>
      <g transform="rotate(64 1003 938)">
        <PlaceText x="1003" y="938" $size={42} $sea>San Francisco Bay</PlaceText>
      </g>
      <circle cx="710" cy="770" r="32" fill="#7a84e6" fillOpacity=".28" stroke="#7a84e6" strokeOpacity=".6" strokeWidth="4" />
      <GoogleLogo x={88} y={1672} size={81} halo={8} />
    </svg>
  );
}

/* ---------- icons ---------- */

const ScrollIcon = () => (
  <svg width="40" height="42" viewBox="0 0 40 42" fill="none" aria-hidden="true">
    <path d="M11 7H37Q36 15 39 26Q41 38 35 40Q31 42 28 37H14Q15 29 12 20Z" fill="#fff" />
    <path d="M1 37H27Q28 39 30 40H6Q2 40 1 37Z" stroke="#fff" strokeWidth="1" fill="#57b9dc" />
    <path d="M15 8V4Q17 0 20 3V9L23 12" stroke="#8fd0e8" strokeWidth="1" />
    <path d="M15 17H21M23 17H35M15 21H26M28 21H35M16 25H19M21 25H35" stroke={BLUE} strokeWidth="2" />
  </svg>
);

const PhoneFrame = () => (
  <PhoneOutline width="512" height="1077" viewBox="1576 41 512 1077" fill="#fff" stroke="#828282" strokeWidth="2" aria-hidden="true">
    <path d="M1648 52H1923V42H1994V52H2021A64 66 0 0 1 2085 118V1052A64 64 0 0 1 2021 1115H1648A64 64 0 0 1 1584 1052V365H1577V340H1584V273H1577V248H1584V183H1577V141H1584V118A64 66 0 0 1 1648 52Z" />
    <circle cx="1834.5" cy="96.5" r="11.5" />
    <rect x="1784" y="131" width="100" height="17" rx="8.5" />
    <circle cx="1831" cy="1035" r="51" />
    <rect x="1815" y="1018.5" width="32" height="33" rx="9" strokeWidth="5" />
  </PhoneOutline>
);

const SolidIcon = ({ d }) => (
  <svg width="27" height="27" viewBox="0 0 24 24" fill="#444" aria-hidden="true">
    <path d={d} />
  </svg>
);

const MAP_ICON =
  "M20.500 3l-.16.03L15 5.100 9 3 3.360 4.900c-.21.07-.36.25-.36.48V20.500c0 .28.22.5.5.5l.16-.03L9 18.900l6 2.100 5.640-1.900c.21-.07.36-.25.36-.48V3.500c0-.28-.22-.5-.5-.5zM15 19l-6-2.110V5l6 2.110V19z";
const LIST_ICON =
  "M19 3H5c-1.100 0-2 .9-2 2v14c0 1.100.9 2 2 2h14c1.100 0 2-.9 2-2V5c0-1.100-.9-2-2-2zm-5 14H7v-2h7v2zm3-4H7v-2h10v2zm0-4H7V7h10v2z";

export default function App() {
  return (
    <>
      <GlobalStyle />
      <Page>
        <Panel>
          <SectionHead $accent>
            <Title>FEATURE SETTINGS</Title>
          </SectionHead>
          <FeatureBar>
            <IconButton type="button" aria-label="Choose icon">
              <ScrollIcon />
            </IconButton>
            <Field $width={485} $gap={61}>
              <Label htmlFor="page-name">Page name:</Label>
              <TextInput id="page-name" defaultValue="Classifieds" />
            </Field>
            <Field $width={222} $gap={39} $center>
              <Label htmlFor="activated">Activated</Label>
              <Toggle id="activated" type="checkbox" role="switch" defaultChecked />
            </Field>
          </FeatureBar>

          <SectionHead>
            <Title>SETTINGS</Title>
            <CollapseButton type="button" aria-label="Collapse settings">
              <svg width="20" height="14" viewBox="0 0 20 14" aria-hidden="true">
                <path d="M2 11.500L10 3.500 18 11.500" fill="none" stroke="#fff" strokeWidth="4.500" />
              </svg>
            </CollapseButton>
          </SectionHead>

          <Form onSubmit={(e) => e.preventDefault()}>
            <Row>
              <Label htmlFor="city">City</Label>
              <div>
                <TextInput id="city" $tall defaultValue="San Francisco, Californie 94103, États-Unis" />
                <MapFrame $h={537} $top={18}>
                  <NorthAmericaMap />
                  <ZoomControl>
                    <ZoomButton type="button" aria-label="Zoom in">
                      <svg width="14" height="14"><path d="M7 0V14M0 7H14" stroke="#666" strokeWidth="4" /></svg>
                    </ZoomButton>
                    <ZoomButton type="button" aria-label="Zoom out">
                      <svg width="14" height="14"><path d="M0 7H14" stroke="#666" strokeWidth="4" /></svg>
                    </ZoomButton>
                  </ZoomControl>
                  <Credits>
                    <span>Données cartographiques ©2017 Google, INEGI</span>
                    <a href="#terms">Conditions d'utilisation</a>
                  </Credits>
                </MapFrame>
              </div>
            </Row>
            <Row>
              <Label htmlFor="radius">Radius *</Label>
              <div>
                <TextInput id="radius" defaultValue="1000" />
                <Hint>in meters</Hint>
              </div>
            </Row>
            <Row>
              <Label htmlFor="country">Country</Label>
              <TextInput id="country" $tall defaultValue="US" />
            </Row>
            <Row>
              <Label htmlFor="limit">Limit ads to this country only</Label>
              <CheckCell>
                <Check id="limit" type="checkbox" defaultChecked />
              </CheckCell>
            </Row>
            <Row>
              <Label htmlFor="expiration">Ads expiration *</Label>
              <div>
                <TextInput id="expiration" defaultValue="30" />
                <Hint>in days</Hint>
              </div>
            </Row>
            <Row>
              <Label htmlFor="moderate">Moderate Ads</Label>
              <CheckCell>
                <Check id="moderate" type="checkbox" defaultChecked />
              </CheckCell>
            </Row>
            <SaveRow>
              <SaveButton type="submit">Save</SaveButton>
            </SaveRow>
          </Form>
        </Panel>

        <Preview>
          <Phone>
            <PhoneFrame />
            <Screen>
              <StatusBar>
                <svg width="41" height="8" aria-hidden="true">
                  {[4, 12, 20, 28, 37].map((x) => (
                    <circle key={x} cx={x} cy="4" r="3.500" fill="#14141c" />
                  ))}
                </svg>
                <span>Carrier</span>
                <svg width="24" height="12" viewBox="-4 0 24 12" fill="none" stroke="#14141c" strokeWidth="2" aria-hidden="true">
                  <path d="M1 4.500Q8 -1.500 15 4.500M3.500 7.500Q8 3.500 12.500 7.500" />
                  <path d="M8 12L5.500 9.500Q8 7.500 10.500 9.500Z" fill="#14141c" stroke="none" />
                </svg>
                <Spacer />
                <span>100 %</span>
                <svg width="30" height="13" aria-hidden="true">
                  <rect x="0" y="0" width="27" height="13" rx="2" fill="#14141c" />
                  <rect x="28" y="4" width="2" height="5" rx="1" fill="#14141c" />
                </svg>
                <Clock>10:06</Clock>
              </StatusBar>
              <NavBar>
                <NavButton type="button">
                  <svg width="16" height="26" viewBox="0 0 16 26" aria-hidden="true">
                    <path d="M14 1.500L3 13 14 24.500" fill="none" stroke="#fff" strokeWidth="4" />
                  </svg>
                  Back
                </NavButton>
                <NavTitle>Classifieds</NavTitle>
                <NavButton type="button" $end aria-label="Refresh">
                  <svg width="31" height="31" viewBox="0 0 31 31" aria-hidden="true">
                    <path d="M27 19A13 13 0 1 1 24 6.500" fill="none" stroke="#fff" strokeWidth="4" />
                    <path d="M30.500 0V13.500H17Z" fill="#fff" />
                  </svg>
                </NavButton>
              </NavBar>
              <SearchBar>
                <SearchBox htmlFor="place">
                  <svg width="15" height="15" viewBox="0 0 15 15" fill="none" stroke="#bdbdbd" strokeWidth="1" aria-hidden="true">
                    <circle cx="6" cy="6" r="5" />
                    <path d="M9.500 9.500L14 14.500" />
                  </svg>
                  <SearchInput id="place" aria-label="Place" defaultValue="San francisco" />
                </SearchBox>
                <Segments>
                  <Segment type="button" $on aria-label="Map view">
                    <SolidIcon d={MAP_ICON} />
                  </Segment>
                  <Segment type="button" aria-label="List view">
                    <SolidIcon d={LIST_ICON} />
                  </Segment>
                </Segments>
              </SearchBar>
              <MapFrame $h={561}>
                <BayAreaMap />
                <Credits $phone>
                  <a href="#data">Données cartographiques</a>
                  <a href="#terms">Conditions d'utilisation</a>
                  <a href="#report">Signaler une erreur cartographique</a>
                </Credits>
                <LocateButton type="button" aria-label="Locate me">
                  <svg width="28" height="28" viewBox="0 0 28 28" fill="none" stroke="#444" aria-hidden="true">
                    <circle cx="14" cy="14" r="10" strokeWidth="3" />
                    <circle cx="14" cy="14" r="5" fill="#444" stroke="none" />
                    <path d="M14 0V4M14 24V28M0 14H4M24 14H28" strokeWidth="2" />
                  </svg>
                </LocateButton>
              </MapFrame>
              <ShopBar>
                <ShopButton type="button">My shop</ShopButton>
              </ShopBar>
            </Screen>
          </Phone>
        </Preview>
      </Page>
    </>
  );
}
